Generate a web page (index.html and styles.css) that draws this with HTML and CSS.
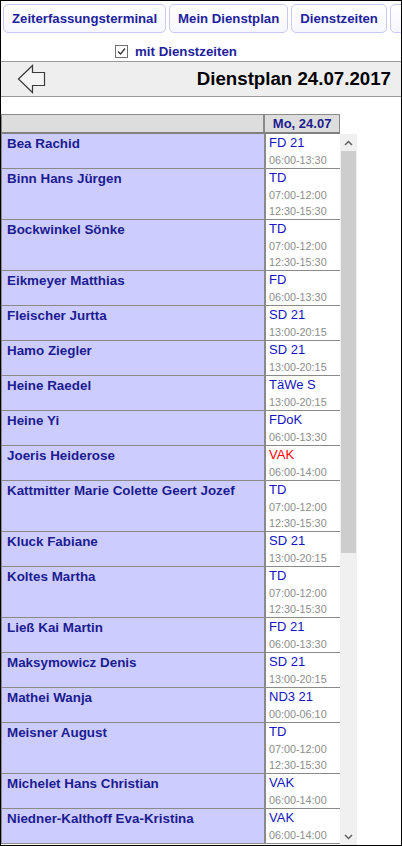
FILE: index.html
```html
<!DOCTYPE html>
<html>
<head>
  <title>Dienstplan 24.07.2017</title>
  <link rel="stylesheet" href="styles.css">
</head>
<body>
  <div class="frame">
    <div class="tabs">
      <div class="tab">Zeiterfassungsterminal</div>
      <div class="tab">Mein Dienstplan</div>
      <div class="tab">Dienstzeiten</div>
      <div class="tab tab-cut"></div>
    </div>

    <div class="toggle">
      <span class="box">
        <svg width="13" height="13" viewBox="0 0 13 13">
          <rect x="0.5" y="0.5" width="12" height="12" fill="#fff" stroke="#6e6e6e"/>
          <polyline points="3,6.5 5.5,9 10,3.5" fill="none" stroke="#333" stroke-width="1.3"/>
        </svg>
      </span>
      mit Dienstzeiten
    </div>

    <div class="titlebar">
      <svg class="back" width="29" height="30" viewBox="0 0 29 30">
        <polygon points="1.5,15 15.5,1.5 15.5,8.5 27.5,8.5 27.5,21.5 15.5,21.5 15.5,28.5" fill="#f4f4f4" stroke="#3a3a3a" stroke-width="1.2"/>
      </svg>
      <h1>Dienstplan 24.07.2017</h1>
    </div>

    <div class="plan">
      <div class="plan-head">
        <div class="h-name"></div>
        <div class="h-day">Mo, 24.07</div>
      </div>
      <div class="plan-body">
        <div class="rows">
          <div class="row"><div class="name">Bea Rachid</div><div class="shift"><div class="code">FD 21</div><div class="time">06:00-13:30</div></div></div>
          <div class="row"><div class="name">Binn Hans Jürgen</div><div class="shift"><div class="code">TD</div><div class="time">07:00-12:00</div><div class="time">12:30-15:30</div></div></div>
          <div class="row"><div class="name">Bockwinkel Sönke</div><div class="shift"><div class="code">TD</div><div class="time">07:00-12:00</div><div class="time">12:30-15:30</div></div></div>
          <div class="row"><div class="name">Eikmeyer Matthias</div><div class="shift"><div class="code">FD</div><div class="time">06:00-13:30</div></div></div>
          <div class="row"><div class="name">Fleischer Jurtta</div><div class="shift"><div class="code">SD 21</div><div class="time">13:00-20:15</div></div></div>
          <div class="row"><div class="name">Hamo Ziegler</div><div class="shift"><div class="code">SD 21</div><div class="time">13:00-20:15</div></div></div>
          <div class="row"><div class="name">Heine Raedel</div><div class="shift"><div class="code">TäWe S</div><div class="time">13:00-20:15</div></div></div>
          <div class="row"><div class="name">Heine Yi</div><div class="shift"><div class="code">FDoK</div><div class="time">06:00-13:30</div></div></div>
          <div class="row"><div class="name">Joeris Heiderose</div><div class="shift"><div class="code absent">VAK</div><div class="time">06:00-14:00</div></div></div>
          <div class="row"><div class="name">Kattmitter Marie Colette Geert Jozef</div><div class="shift"><div class="code">TD</div><div class="time">07:00-12:00</div><div class="time">12:30-15:30</div></div></div>
          <div class="row"><div class="name">Kluck Fabiane</div><div class="shift"><div class="code">SD 21</div><div class="time">13:00-20:15</div></div></div>
          <div class="row"><div class="name">Koltes Martha</div><div class="shift"><div class="code">TD</div><div class="time">07:00-12:00</div><div class="time">12:30-15:30</div></div></div>
          <div class="row"><div class="name">Ließ Kai Martin</div><div class="shift"><div class="code">FD 21</div><div class="time">06:00-13:30</div></div></div>
          <div class="row"><div class="name">Maksymowicz Denis</div><div class="shift"><div class="code">SD 21</div><div class="time">13:00-20:15</div></div></div>
          <div class="row"><div class="name">Mathei Wanja</div><div class="shift"><div class="code">ND3 21</div><div class="time">00:00-06:10</div></div></div>
          <div class="row"><div class="name">Meisner August</div><div class="shift"><div class="code">TD</div><div class="time">07:00-12:00</div><div class="time">12:30-15:30</div></div></div>
          <div class="row"><div class="name">Michelet Hans Christian</div><div class="shift"><div class="code">VAK</div><div class="time">06:00-14:00</div></div></div>
          <div class="row"><div class="name">Niedner-Kalthoff Eva-Kristina</div><div class="shift"><div class="code">VAK</div><div class="time">06:00-14:00</div></div></div>
        </div>

        <div class="scrollbar">
          <div class="sb-btn">
            <svg width="9" height="6" viewBox="0 0 9 6"><polyline points="1,5 4.5,1.5 8,5" fill="none" stroke="#606060" stroke-width="1.5"/></svg>
          </div>
          <div class="sb-thumb"></div>
          <div class="sb-btn sb-down">
            <svg width="9" height="6" viewBox="0 0 9 6"><polyline points="1,1 4.5,4.5 8,1" fill="none" stroke="#606060" stroke-width="1.5"/></svg>
          </div>
        </div>
      </div>
    </div>
  </div>
</body>
</html>
```

FILE: styles.css
```css
html, body {
  margin: 0;
  background: #fff;
}
body {
  font-family: "Liberation Sans", Arial, sans-serif;
}
.frame {
  box-sizing: border-box;
  width: 402px;
  height: 846px;
  border: 1px solid #000;
  display: flex;
  flex-direction: column;
  overflow: hidden;
}

/* top buttons */
.tabs {
  flex: none;
  display: flex;
  gap: 3px;
  padding: 3px 0 0 2px;
  white-space: nowrap;
  overflow: hidden;
}
.tab {
  flex: none;
  box-sizing: border-box;
  height: 29px;
  padding: 0 8px;
  border: 1px solid #c9c9f2;
  border-radius: 5px;
  background: linear-gradient(#fff, #f6f6ff);
  font-size: 13.2px;
  font-weight: bold;
  line-height: 27px;
  color: #231f9c;
}
.tab-cut { width: 40px; }

.toggle {
  flex: none;
  box-sizing: border-box;
  height: 28px;
  padding: 8px 0 0 114px;
  display: flex;
  align-items: center;
  font-size: 13.3px;
  font-weight: bold;
  color: #231f9c;
}
.toggle .box { display: flex; margin-right: 7px; }

/* title bar */
.titlebar {
  flex: none;
  box-sizing: border-box;
  height: 36px;
  padding: 0 10px 0 16px;
  display: flex;
  align-items: center;
  justify-content: space-between;
  background: #eee;
  border-top: 1px solid #9a9a9a;
  border-bottom: 1px solid #9a9a9a;
}
.titlebar h1 {
  margin: 0;
  font-size: 18.7px;
  color: #000;
}

/* plan table */
.plan {
  flex: 1;
  min-height: 0;
  margin-top: 17px;
  display: flex;
  flex-direction: column;
}
.plan-head {
  flex: none;
  display: flex;
  width: 339px;
  border-top: 1px solid #8a8a8a;
  border-bottom: 2px solid #808080;
}
.h-name {
  width: 262px;
  height: 17px;
  background: #ddd;
  border-left: 1px solid #8a8a8a;
}
.h-day {
  width: 74px;
  height: 17px;
  background: #ddd;
  border-left: 2px solid #8a8a8a;
  border-right: 1px solid #8a8a8a;
  text-align: center;
  font-size: 13px;
  font-weight: bold;
  line-height: 17px;
  color: #1c1c8c;
}
.plan-body {
  flex: 1;
  min-height: 0;
  display: flex;
  overflow: hidden;
}
.rows {
  flex: none;
  width: 339px;
}
.row {
  display: flex;
  border-left: 1px solid #8a8a8a;
  border-bottom: 1px solid #8a8a8a;
}
.name {
  box-sizing: border-box;
  width: 262px;
  padding: 1px 5px 0;
  background: #ccf;
  font-size: 13.4px;
  font-weight: bold;
  line-height: 18px;
  color: #1c1c90;
}
.shift {
  box-sizing: border-box;
  width: 76px;
  padding-left: 3px;
  border-left: 2px solid #8a8a8a;
  background: #fff;
}
.code {
  font-size: 13px;
  line-height: 18px;
  color: #1414c0;
}
.code.absent { color: #f00; }
.time {
  font-size: 10.8px;
  line-height: 16px;
  color: #8c8c8c;
}

/* scrollbar drawn by hand */
.scrollbar {
  flex: none;
  width: 17px;
  display: flex;
  flex-direction: column;
  background: #f0f0f0;
}
.sb-btn {
  flex: none;
  height: 17px;
  display: flex;
  align-items: center;
  justify-content: center;
}
.sb-thumb {
  flex: none;
  height: 402px;
  margin: 0 1px;
  background: #cdcdcd;
}
.sb-down { margin-top: auto; }
```
